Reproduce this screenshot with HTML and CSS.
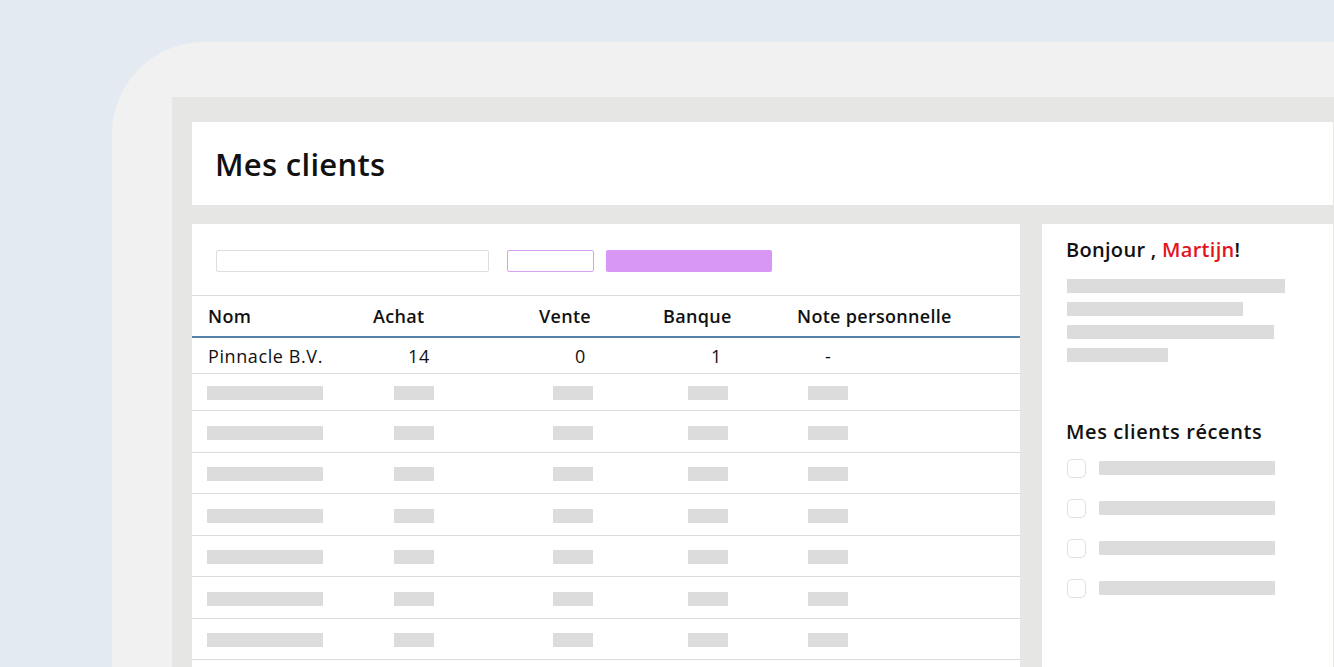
FILE: index.html
```html
<!DOCTYPE html>
<html>
<head>
    <title>Mes clients</title>
    <link rel="stylesheet" href="styles.css">
</head>
<body>
    <div class="device">
        <div class="screen">
            <header class="page-head">
                <h1>Mes clients</h1>
            </header>

            <div class="panels">
                <section class="main-panel">
                    <div class="toolbar">
                        <div class="search"></div>
                        <div class="btn-outline"></div>
                        <div class="btn-fill"></div>
                    </div>

                    <div class="table">
                        <div class="thead">
                            <span>Nom</span>
                            <span>Achat</span>
                            <span>Vente</span>
                            <span>Banque</span>
                            <span>Note personnelle</span>
                        </div>
                        <div class="row data">
                            <span class="c-nom">Pinnacle B.V.</span>
                            <span class="c-achat">14</span>
                            <span class="c-vente">0</span>
                            <span class="c-banque">1</span>
                            <span class="c-note">-</span>
                        </div>
                        <div class="row skel first"><i class="bar wide"></i><i class="bar"></i><i class="bar"></i><i class="bar"></i><i class="bar"></i></div>
                        <div class="row skel"><i class="bar wide"></i><i class="bar"></i><i class="bar"></i><i class="bar"></i><i class="bar"></i></div>
                        <div class="row skel"><i class="bar wide"></i><i class="bar"></i><i class="bar"></i><i class="bar"></i><i class="bar"></i></div>
                        <div class="row skel"><i class="bar wide"></i><i class="bar"></i><i class="bar"></i><i class="bar"></i><i class="bar"></i></div>
                        <div class="row skel"><i class="bar wide"></i><i class="bar"></i><i class="bar"></i><i class="bar"></i><i class="bar"></i></div>
                        <div class="row skel"><i class="bar wide"></i><i class="bar"></i><i class="bar"></i><i class="bar"></i><i class="bar"></i></div>
                        <div class="row skel"><i class="bar wide"></i><i class="bar"></i><i class="bar"></i><i class="bar"></i><i class="bar"></i></div>
                    </div>
                </section>

                <aside class="side-panel">
                    <h2 class="greeting">Bonjour , <span class="name">Martijn</span>!</h2>
                    <div class="lines">
                        <i class="line l1"></i>
                        <i class="line l2"></i>
                        <i class="line l3"></i>
                        <i class="line l4"></i>
                    </div>

                    <h2 class="recent-title">Mes clients récents</h2>
                    <ul class="recent">
                        <li><span class="check"></span><i class="line"></i></li>
                        <li><span class="check"></span><i class="line"></i></li>
                        <li><span class="check"></span><i class="line"></i></li>
                        <li><span class="check"></span><i class="line"></i></li>
                    </ul>
                </aside>
            </div>
        </div>
    </div>
</body>
</html>
```

FILE: styles.css
```css
body {
    margin: 0;
    padding: 0;
    width: 1334px;
    height: 667px;
    overflow: hidden;
    background: #e3eaf1;
    font-family: "Open Sans", "Noto Sans", sans-serif;
    color: #111;
}

/* outer tablet frame */
.device {
    margin: 42px 0 0 112px;
    padding: 55px 0 0 60px;
    height: 570px;
    background: #f1f1f1;
    border-top-left-radius: 92px;
}

.screen {
    height: 100%;
    padding: 25px 1px 0 20px;
    background: #e6e6e5;
    box-sizing: border-box;
}

.page-head {
    height: 83px;
    padding-left: 23px;
    display: flex;
    align-items: center;
    background: #fff;
}

.page-head h1 {
    margin: 0;
    font-size: 31px;
    font-weight: 600;
    letter-spacing: 0.3px;
}

.panels {
    display: flex;
    gap: 22px;
    margin-top: 19px;
    height: 460px;
}

/* left: clients table */
.main-panel {
    width: 828px;
    padding-top: 26px;
    background: #fff;
}

.toolbar {
    display: flex;
    padding-left: 24px;
    height: 22px;
}

.search {
    width: 273px;
    border: 1px solid #dedede;
    border-radius: 2px;
    box-sizing: border-box;
}

.btn-outline {
    width: 87px;
    margin-left: 18px;
    border: 1px solid #d6a0ef;
    border-radius: 2px;
    box-sizing: border-box;
}

.btn-fill {
    width: 166px;
    margin-left: 12px;
    background: #d896f5;
    border-radius: 2px;
}

.table {
    margin-top: 23px;
    border-top: 1px solid #dcdcdc;
}

.thead {
    display: grid;
    grid-template-columns: 165px 166px 124px 134px 1fr;
    align-items: center;
    height: 40px;
    padding-left: 16px;
    border-bottom: 2px solid #5782a9;
    font-size: 18px;
    font-weight: 600;
    letter-spacing: 0.3px;
}

.row {
    display: grid;
    grid-template-columns: 187px 159px 135px 120px 1fr;
    align-items: center;
    padding-left: 15px;
    border-bottom: 1px solid #dcdcdc;
    box-sizing: border-box;
}

.row.data {
    height: 36px;
    font-size: 18px;
    letter-spacing: 0.6px;
}

.c-nom { padding-left: 1px; }
.c-achat { padding-left: 14px; }
.c-vente { padding-left: 22px; }
.c-banque { padding-left: 23px; }
.c-note { padding-left: 17px; }

.row.skel {
    height: 41.5px;
    padding-top: 3px;
}

.row.skel.first {
    height: 37px;
    padding-top: 2px;
}

.bar {
    display: block;
    width: 40px;
    height: 14px;
    background: #dddcdd;
}

.bar.wide {
    width: 116px;
}

/* right: greeting + recent clients */
.side-panel {
    flex: 1;
    padding: 13px 0 0 24px;
    background: #fff;
}

.side-panel h2 {
    margin: 0;
    font-size: 20px;
    font-weight: 600;
    line-height: 26px;
    letter-spacing: 0.3px;
}

.name {
    color: #e3141e;
}

.lines {
    display: flex;
    flex-direction: column;
    gap: 9px;
    margin-top: 16px;
    padding-left: 1px;
}

.line {
    display: block;
    height: 14px;
    background: #dddcdd;
}

.l1 { width: 218px; }
.l2 { width: 176px; }
.l3 { width: 207px; }
.l4 { width: 101px; }

.recent-title {
    margin-top: 57px !important;
    letter-spacing: 0.6px !important;
}

.recent {
    list-style: none;
    margin: 3px 0 0;
    padding: 0 0 0 1px;
}

.recent li {
    display: flex;
    align-items: center;
    gap: 13px;
    height: 40px;
}

.check {
    width: 19px;
    height: 19px;
    border: 1px solid #e0e0e0;
    border-radius: 5px;
    box-sizing: border-box;
}

.recent .line {
    width: 176px;
}
```
